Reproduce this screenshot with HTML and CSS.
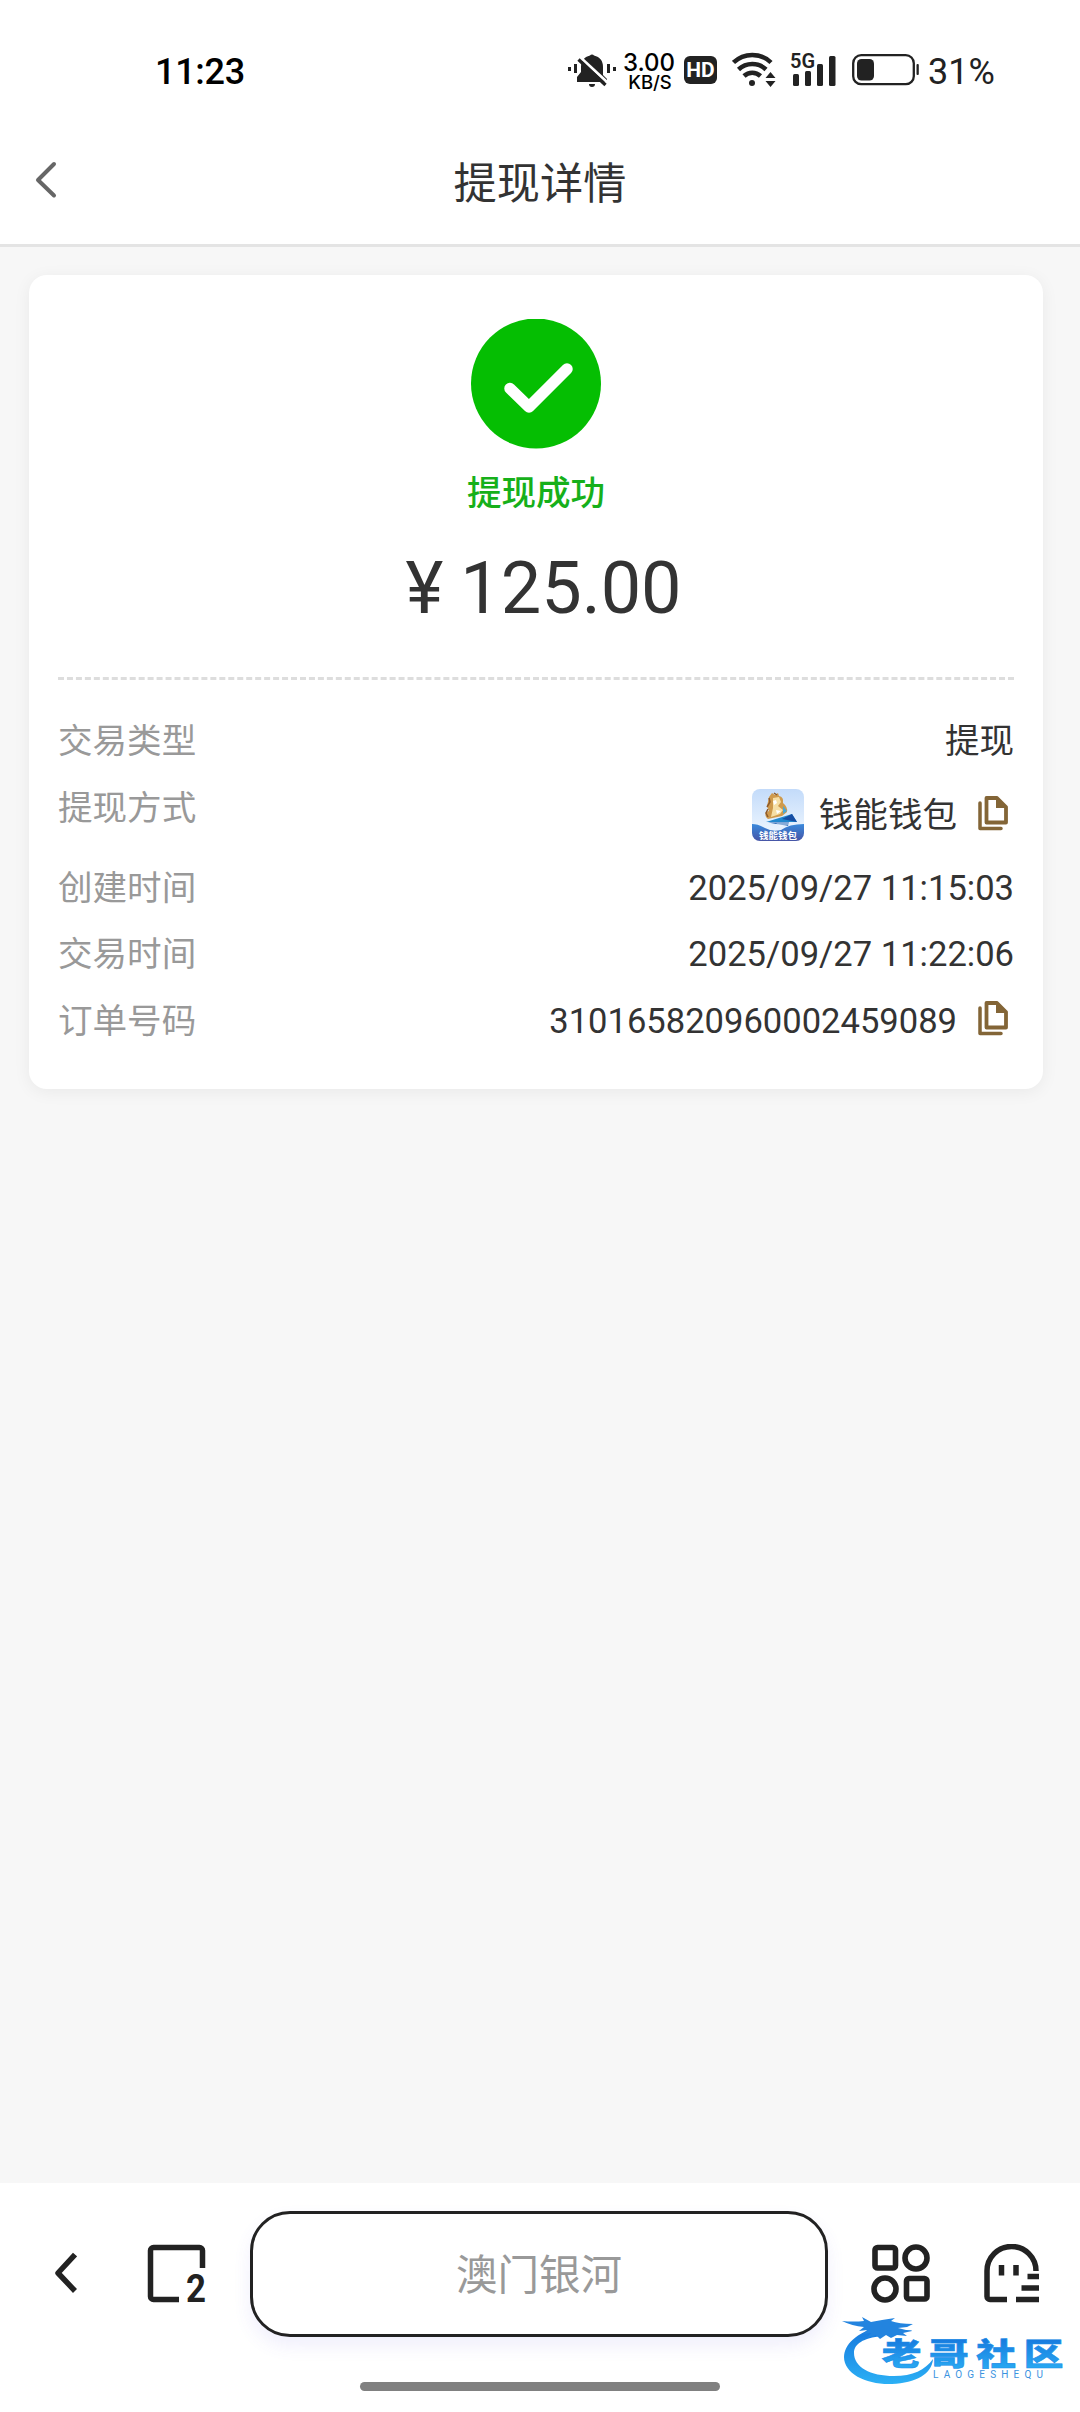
FILE: index.html
```
<!DOCTYPE html>
<html lang="zh-CN">
<head>
    <meta charset="UTF-8">
    <meta name="viewport" content="width=device-width, initial-scale=1.0">
    <title>提现详情</title>
    <link rel="stylesheet" href="styles.css">
</head>
<body>
    <div class="status-bar">
        <span class="time">11:23</span>
        <div class="status-icons">
            <svg class="mute" width="48" height="34" viewBox="0 0 48 34" fill="#222">
                <path d="M22 2.500a2.500 2.500 0 0 1 4 0c6 1.500 9 5.500 9 11.500v8l4 4v3H9v-5l4-5v-5C13 8 16 4 22 2.500zM21 31h6a3 3 0 0 1-6 0z"/>
                <path d="M0 14h3v4H0zM6 11h3v9H6zM39 11h3v9h-3zM45 14h3v4h-3z"/>
                <path d="M13 5l27 25" stroke="#fff" stroke-width="3"/>
                <path d="M10.500 6.500L37.500 32" stroke="#222" stroke-width="3.300"/>
            </svg>
            <div class="speed">
                <span class="speed-num">3.00</span>
                <span class="speed-unit">KB/S</span>
            </div>
            <span class="hd">HD</span>
            <svg class="wifi" width="45" height="35" viewBox="0 0 45 35" fill="none" stroke="#222" stroke-width="4.500">
                <path d="M1.500 10.500a27 27 0 0 1 37.500 0M6.500 17.500a20 20 0 0 1 27.500 0M12 24a12 12 0 0 1 16.500 0"/>
                <circle cx="20" cy="31" r="3" fill="#222" stroke="none"/>
                <path d="M33.500 26l5-6 5 6zM33.500 29h10l-5 6z" fill="#222" stroke="none"/>
            </svg>
            <div class="signal">
                <span class="net">5G</span>
                <svg width="46" height="34" viewBox="0 0 46 34" fill="#222">
                    <rect x="3" y="21" width="6" height="12" rx="1.500"/>
                    <rect x="15" y="18" width="6" height="15" rx="1.500"/>
                    <rect x="27" y="11" width="6" height="22" rx="1.500"/>
                    <rect x="39" y="3" width="6.500" height="30" rx="1.500"/>
                </svg>
            </div>
            <svg class="battery" width="68" height="32" viewBox="0 0 68 32">
                <rect x="1.200" y="1.200" width="60.600" height="29" rx="8" fill="none" stroke="#222" stroke-width="2.300"/>
                <rect x="5" y="5" width="17" height="21.500" rx="4.500" fill="#222"/>
                <rect x="64.500" y="10" width="2.300" height="11" rx="1" fill="#222"/>
            </svg>
            <span class="percent">31%</span>
        </div>
    </div>

    <header class="header">
        <svg class="back" width="24" height="40" viewBox="0 0 24 40">
            <path d="M20 4L4 20l16 15.500" fill="none" stroke="#666" stroke-width="4" stroke-linecap="round" stroke-linejoin="round"/>
        </svg>
        <h1>提现详情</h1>
    </header>

    <main class="content">
        <div class="card">
            <div class="result">
                <svg width="130" height="130" viewBox="0 0 130 130">
                    <circle cx="65" cy="64.500" r="65" fill="#05be02"/>
                    <path d="M39 69.500l19 18.500 38-38" fill="none" stroke="#fff" stroke-width="11.500" stroke-linecap="round" stroke-linejoin="round"/>
                </svg>
                <p class="state">提现成功</p>
                <p class="amount"><span>¥</span>125.00</p>
            </div>
            <ul class="list">
                <li><label>交易类型</label><span>提现</span></li>
                <li class="method">
                    <label>提现方式</label>
                    <div class="value">
                        <svg class="wallet" width="52" height="52" viewBox="0 0 52 52">
                            <defs>
                                <linearGradient id="sky" x1="0" y1="0" x2="0" y2="1">
                                    <stop offset="0" stop-color="#c3dbfa"/>
                                    <stop offset="1" stop-color="#f4faff"/>
                                </linearGradient>
                                <linearGradient id="sea" x1="0" y1="0" x2="0" y2="1">
                                    <stop offset="0" stop-color="#3989dc"/>
                                    <stop offset="1" stop-color="#4755a6"/>
                                </linearGradient>
                                <clipPath id="tile"><rect width="52" height="52" rx="8"/></clipPath>
                            </defs>
                            <g clip-path="url(#tile)">
                                <rect width="52" height="52" fill="url(#sky)"/>
                                <path d="M0 35q6 0 13 4t16 2q8-6 23-6v17H0z" fill="url(#sea)"/>
                                <path d="M20 4l3 2 3-2 1 3q5 1 4 7 5 4 4 9l-5 4-14 3q-4-3-2-7l3-1-2-5 2-9z" fill="#cf9a4c"/>
                                <path d="M21 9l6-1 2 5-3 4 5 4-3 4-9 3 2-9z" fill="#f6dfa6"/>
                                <path d="M21 12l3-1 1 3-3 2zM24 21l5 1-4 3z" fill="#fff"/>
                                <path d="M17 9l1 4-3 5M16 20l-2 4 2 4M22 4l3 2" stroke="#8e5a2a" stroke-width="1.500" fill="none"/>
                                <path d="M31 17l4 5-4 3z" fill="#4aa7d8"/>
                                <path d="M14 33l26-8 5 8z" fill="#2188ce"/>
                                <path d="M30 30l10-5 5 8z" fill="#164da3"/>
                                <path d="M16 33.500h21l-1 3.500z" fill="#1b5eb0"/>
                                <path d="M28 38l9-2v-2H24z" fill="#f4faff" opacity=".5"/>
                            </g>
                            <text x="7" y="49.500" textLength="38" lengthAdjust="spacingAndGlyphs" class="wallet-text">钱能钱包</text>
                        </svg>
                        <span>钱能钱包</span>
                        <svg class="copy" width="30" height="35" viewBox="0 0 30 35">
                            <path d="M2 7v25.500h21" fill="none" stroke="#836537" stroke-width="3.500" stroke-linejoin="round" stroke-linecap="round"/>
                            <path d="M10 2h9l9 9v15.500H8.500V2z" fill="none" stroke="#836537" stroke-width="3.800" stroke-linejoin="round"/>
                            <path d="M18 1l11 11H18z" fill="#836537"/>
                        </svg>
                    </div>
                </li>
                <li><label>创建时间</label><span>2025/09/27 11:15:03</span></li>
                <li><label>交易时间</label><span>2025/09/27 11:22:06</span></li>
                <li>
                    <label>订单号码</label>
                    <div class="value">
                        <span>310165820960002459089</span>
                        <svg class="copy" width="30" height="35" viewBox="0 0 30 35">
                            <path d="M2 7v25.500h21" fill="none" stroke="#836537" stroke-width="3.500" stroke-linejoin="round" stroke-linecap="round"/>
                            <path d="M10 2h9l9 9v15.500H8.500V2z" fill="none" stroke="#836537" stroke-width="3.800" stroke-linejoin="round"/>
                            <path d="M18 1l11 11H18z" fill="#836537"/>
                        </svg>
                    </div>
                </li>
            </ul>
        </div>
    </main>

    <footer class="toolbar">
        <div class="tools">
            <svg width="22" height="44" viewBox="0 0 22 44">
                <path d="M20 2.500L3 21l17 18" fill="none" stroke="#222" stroke-width="5.500" stroke-linejoin="round"/>
            </svg>
            <svg class="tabs" width="64" height="76" viewBox="0 -8 64 76">
                <path d="M32 55.500H6.500a3 3 0 0 1-3-3V6.500a3 3 0 0 1 3-3h46a3 3 0 0 1 3 3V24" fill="none" stroke="#222" stroke-width="5.500"/>
                <text x="39" y="58" textLength="20" lengthAdjust="spacingAndGlyphs" class="tabs-num">2</text>
            </svg>
            <div class="address">澳门银河</div>
            <svg class="apps" width="60" height="60" viewBox="0 0 60 60" fill="none" stroke="#222" stroke-width="5.600">
                <rect x="4" y="3.500" width="20.500" height="20.500" rx="2.500"/>
                <circle cx="45" cy="14" r="11"/>
                <circle cx="14" cy="45" r="11"/>
                <rect x="35.500" y="34.500" width="20.500" height="20.500" rx="2.500"/>
            </svg>
            <svg class="ghost" width="56" height="60" viewBox="0 0 56 60" fill="none" stroke="#222" stroke-width="5.500">
                <path d="M23 55.500H6a3 3 0 0 1-3-3V27a24.500 24.500 0 0 1 49 0"/>
                <path d="M17.500 21v10.500M32 21v10.500M43.500 32.500H55M37.500 44H55M32 55.500H55"/>
            </svg>
        </div>
        <div class="home-bar"></div>
    </footer>

    <svg class="watermark" width="224" height="76" viewBox="0 0 224 76">
        <defs>
            <linearGradient id="blue" x1="0" y1="0" x2="0" y2="1">
                <stop offset="0" stop-color="#1676dc"/>
                <stop offset="1" stop-color="#2bb0f5"/>
            </linearGradient>
        </defs>
        <path d="M38 13C14 18 2 31 2 43c0 17 23 28 48 27 24-1 40-10 41-25-8 11-20 17-39 17-24 0-40-9-40-23 0-9 9-15 28-17z" fill="url(#blue)"/>
        <path d="M0 7q12 1 22 0l-2-4 9 5 11-2 13-2-4 3q8 3 22 3l-6 3-9 1 8 2q6 0 6 1l-9 2 4 3-10-1-6 3-5-3-6 4-4-4-9 3 4-5-8 1 4-4-8 1 5-4Q10 12 0 7z" fill="#2384df"/>
        <text x="31" y="51" transform="scale(1.28 1)" class="mark-name">老哥社区</text>
        <text x="91" y="64" textLength="110" class="mark-sub">LAOGESHEQU</text>
    </svg>
</body>
</html>
```
FILE: styles.css
```
* {
    box-sizing: border-box;
}
body {
    margin: 0;
    height: 2412px;
    display: flex;
    flex-direction: column;
    background-color: #f7f7f7;
    color: #333;
    font-family: Roboto, "Noto Sans CJK SC", sans-serif;
    font-size: 34.56px;
    position: relative;
    overflow: hidden;
}
svg {
    display: block;
    flex-shrink: 0;
}
h1, p, ul {
    margin: 0;
    padding: 0;
}

/* status bar */
.status-bar {
    height: 120px;
    padding: 24px 86px 0 155px;
    display: flex;
    justify-content: space-between;
    align-items: center;
    background-color: #fff;
    color: #000;
}
.time {
    font-size: 36px;
    font-weight: 500;
    letter-spacing: -0.3px;
}
.status-icons {
    display: flex;
    align-items: center;
    height: 42px;
    margin-top: -5px;
}
.speed {
    display: flex;
    flex-direction: column;
    align-items: center;
    width: 52px;
    margin: 3px 9px 0 7px;
    font-family: Inter, sans-serif;
    font-weight: 500;
}
.speed-num {
    font-size: 24px;
    line-height: 21px;
}
.speed-unit {
    padding-left: 2px;
    font-size: 18.500px;
    line-height: 18px;
}
.hd {
    width: 33px;
    height: 28px;
    border-radius: 6px;
    background-color: #222;
    color: #fff;
    font-size: 21px;
    font-weight: 700;
    line-height: 29px;
    text-align: center;
}
.wifi {
    margin-left: 15px;
}
.signal {
    position: relative;
    margin-left: 13px;
}
.net {
    position: absolute;
    left: 0;
    top: 0;
    color: #222;
    font-size: 20px;
    font-weight: 600;
    line-height: 16px;
}
.battery {
    margin: 0 8px 0 16px;
}
.percent {
    width: 66px;
    color: #222;
    font-size: 36px;
    margin-top: 4px;
}

/* page title */
.header {
    height: 127px;
    padding: 0 34px 4px;
    display: grid;
    grid-template-columns: 24px 1fr 24px;
    align-items: center;
    background-color: #fff;
    border-bottom: 3px solid #e4e4e4;
}
.header h1 {
    font-size: 43.2px;
    font-weight: 400;
    text-align: center;
}

/* card */
.content {
    flex: 1;
    padding: 28px 37px 0 29px;
}
.card {
    height: 814px;
    padding: 44px 29px 0;
    border-radius: 18px;
    background-color: #fff;
    box-shadow: 0 3px 17px rgba(0, 0, 0, 0.06);
}
.result {
    height: 361px;
    display: flex;
    flex-direction: column;
    align-items: center;
    border-bottom: 3px dashed #ddd;
}
.state {
    margin-top: 19px;
    color: #16b01a;
    font-weight: 500;
    line-height: 50px;
}
.amount {
    margin-top: 26px;
    padding-left: 15px;
    font-size: 72px;
    line-height: 90px;
}
.amount span {
    margin-right: 17px;
}
.list {
    padding-top: 28px;
    list-style: none;
}
.list li {
    display: flex;
    justify-content: space-between;
    align-items: flex-start;
    height: 66.600px;
    line-height: 66px;
}
.list .method {
    height: 80px;
}
.list label {
    color: #999;
}
.value {
    display: flex;
    align-items: center;
}
.method .value {
    height: 81px;
}
.wallet {
    margin-right: 15px;
}
.wallet-text {
    fill: #fff;
    font-size: 9px;
    font-weight: 700;
}
.copy {
    margin: 0 6px 4px 21px;
}

/* browser toolbar */
.toolbar {
    height: 229px;
    padding-top: 28px;
    background-color: #fff;
}
.tools {
    display: flex;
    align-items: center;
    padding: 0 40px 0 55px;
}
.tabs {
    margin: 0 39px 0 70px;
}
.tabs-num {
    fill: #222;
    font-size: 39px;
    font-weight: 700;
}
.address {
    width: 578px;
    height: 126px;
    border: 3px solid #222;
    border-radius: 40px;
    color: #999;
    background-color: #fff;
    box-shadow: 0 9px 18px rgba(90, 80, 220, 0.09);
    font-size: 41.500px;
    line-height: 124px;
    text-align: center;
}
.apps {
    margin: 0 53px 0 43px;
}
.home-bar {
    width: 360px;
    height: 9px;
    margin: 45px auto 0;
    border-radius: 5px;
    background-color: #808080;
}

/* forum logo on top of the page corner */
.watermark {
    position: absolute;
    left: 842px;
    top: 2314px;
}
.mark-name {
    fill: url(#blue);
    stroke: #1d8ee8;
    stroke-width: 0.6px;
    font-size: 31px;
    font-weight: 900;
    letter-spacing: 6px;
}
.mark-sub {
    fill: #3b93df;
    font-size: 10px;
}
```
